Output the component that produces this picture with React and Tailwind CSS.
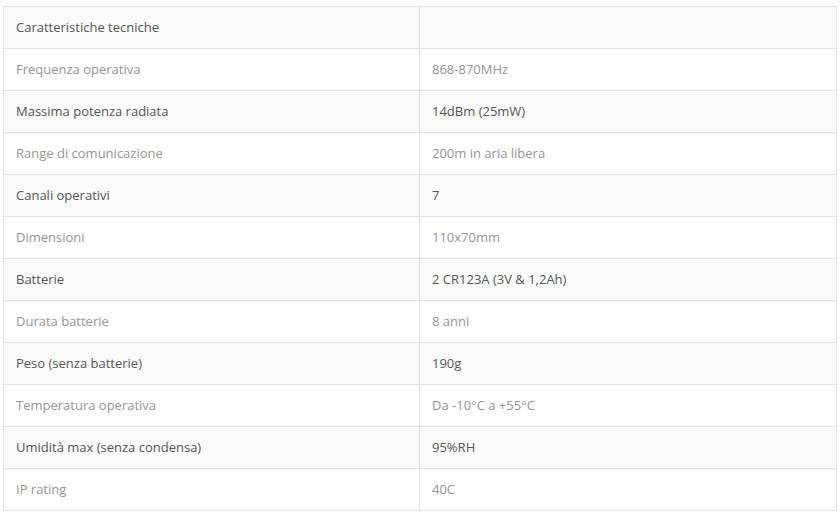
import React from 'react';

const rows = [
  ['Caratteristiche tecniche', ''],
  ['Frequenza operativa', '868-870MHz'],
  ['Massima potenza radiata', '14dBm (25mW)'],
  ['Range di comunicazione', '200m in aria libera'],
  ['Canali operativi', '7'],
  ['Dimensioni', '110x70mm'],
  ['Batterie', '2 CR123A (3V & 1,2Ah)'],
  ['Durata batterie', '8 anni'],
  ['Peso (senza batterie)', '190g'],
  ['Temperatura operativa', 'Da -10°C a +55°C'],
  ['Umidità max (senza condensa)', '95%RH'],
  ['IP rating', '40C'],
];

const App = () => {
  return (
    <div className="bg-white w-[840px] h-[518px] pt-[6px] pl-[3px]" style={{ fontFamily: '"Open Sans", sans-serif' }}>
      <table className="w-[834px] border-collapse text-[13px]">
        <tbody>
          {rows.map((row, index) => {
            const dark = index % 2 === 0;
            return (
              <tr key={index} className={dark ? 'bg-[#fafafa] text-[#555]' : 'bg-white text-[#959595]'}>
                <td className="w-[416px] h-[42px] border border-[#e2e2e2] px-3 py-0 align-middle">{row[0]}</td>
                <td className="h-[42px] border border-[#e2e2e2] px-3 py-0 align-middle">{row[1]}</td>
              </tr>
            );
          })}
        </tbody>
      </table>
    </div>
  );
};

export default App;
